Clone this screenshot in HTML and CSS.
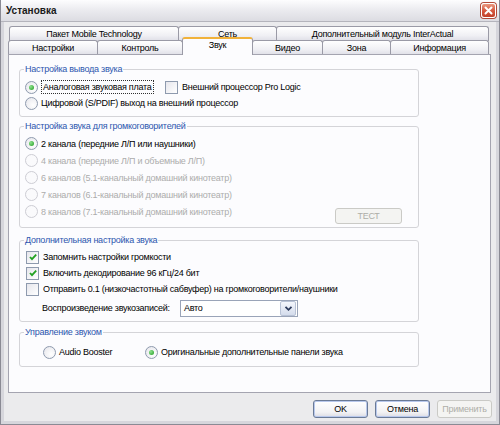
FILE: index.html
```html
<!DOCTYPE html>
<html>
<head>
<meta charset="UTF-8">
<title>Установка</title>
<link rel="stylesheet" href="styles.css">
</head>
<body>
<div class="window">
  <div class="titlebar">
    <span class="title">Установка</span>
    <span class="close-btn">
      <svg width="13" height="13" viewBox="0 0 13 13"><path d="M3.5 3.5 L9.5 9.5 M9.5 3.5 L3.5 9.5" stroke="#ffffff" stroke-width="2" stroke-linecap="round"/></svg>
    </span>
  </div>
  <div class="frame">
    <div class="client">
      <div class="tab-row back">
        <div class="tab w169">Пакет Mobile Technology</div>
        <div class="tab w99">Сеть</div>
        <div class="tab grow">Дополнительный модуль InterActual</div>
      </div>
      <div class="tab-row front">
        <div class="tab w89">Настройки</div>
        <div class="tab w86">Контроль</div>
        <div class="tab w71 selected">Звук</div>
        <div class="tab w71">Видео</div>
        <div class="tab w68">Зона</div>
        <div class="tab grow">Информация</div>
      </div>

      <div class="page">
        <fieldset class="group g-output">
          <legend>Настройка вывода звука</legend>
          <div class="row">
            <label class="opt first-opt"><span class="radio on"></span><span class="focus">Аналоговая звуковая плата</span></label>
            <label class="opt"><span class="check"></span>Внешний процессор Pro Logic</label>
          </div>
          <div class="row">
            <label class="opt"><span class="radio"></span>Цифровой (S/PDIF) выход на внешний процессор</label>
          </div>
        </fieldset>

        <fieldset class="group g-speakers">
          <legend>Настройка звука для громкоговорителей</legend>
          <div class="row tall">
            <label class="opt"><span class="radio on"></span>2 канала (передние Л/П или наушники)</label>
          </div>
          <div class="row tall">
            <label class="opt disabled"><span class="radio"></span>4 канала (передние Л/П и объемные Л/П)</label>
          </div>
          <div class="row tall">
            <label class="opt disabled"><span class="radio"></span>6 каналов (5.1-канальный домашний кинотеатр)</label>
          </div>
          <div class="row tall">
            <label class="opt disabled"><span class="radio"></span>7 каналов (6.1-канальный домашний кинотеатр)</label>
          </div>
          <div class="row tall last">
            <label class="opt disabled"><span class="radio"></span>8 каналов (7.1-канальный домашний кинотеатр)</label>
            <span class="button test disabled">ТЕСТ</span>
          </div>
        </fieldset>

        <fieldset class="group g-extra">
          <legend>Дополнительная настройка звука</legend>
          <div class="row">
            <label class="opt"><span class="check on"><svg width="10" height="10" viewBox="0 0 10 10"><path d="M2 5 L4 7.2 L8.2 2.6" fill="none" stroke="#21a121" stroke-width="1.8"/></svg></span>Запомнить настройки громкости</label>
          </div>
          <div class="row">
            <label class="opt"><span class="check on"><svg width="10" height="10" viewBox="0 0 10 10"><path d="M2 5 L4 7.2 L8.2 2.6" fill="none" stroke="#21a121" stroke-width="1.8"/></svg></span>Включить декодирование 96 кГц/24 бит</label>
          </div>
          <div class="row">
            <label class="opt"><span class="check"></span>Отправить 0.1 (низкочастотный сабвуфер) на громкоговорители/наушники</label>
          </div>
          <div class="row select-row">
            <span class="select-label">Воспроизведение звукозаписей:</span>
            <span class="select">
              <span class="select-value">Авто</span>
              <span class="select-arrow">
                <svg width="9" height="7" viewBox="0 0 9 7"><path d="M1.5 1.8 L4.5 4.8 L7.5 1.8" fill="none" stroke="#2c3a5c" stroke-width="1.8"/></svg>
              </span>
            </span>
          </div>
        </fieldset>

        <fieldset class="group g-control">
          <legend>Управление звуком</legend>
          <div class="row">
            <label class="opt booster"><span class="radio"></span>Audio Booster</label>
            <label class="opt"><span class="radio on"></span>Оригинальные дополнительные панели звука</label>
          </div>
        </fieldset>
      </div>

      <div class="buttons">
        <span class="button default">OK</span>
        <span class="button default">Отмена</span>
        <span class="button disabled">Применить</span>
      </div>
    </div>
  </div>
</div>
</body>
</html>
```

FILE: styles.css
```css
body {
 margin: 0;
 font-family: "Liberation Sans", Arial, sans-serif;
 font-size: 9px;
 letter-spacing: -0.25px;
 color: #000000;
 background: #ffffff;
}
.window {
 width: 500px;
 height: 425px;
 box-sizing: border-box;
 border: 1px solid #8a8a94;
 border-top: none;
 display: flex;
 flex-direction: column;
 background: #d6d6dc;
}
.titlebar {
 height: 22px;
 box-sizing: border-box;
 border-bottom: 1px solid #b4b4bc;
 background: linear-gradient(#fdfdfe, #ececf0 45%, #dcdce2);
 display: flex;
 align-items: center;
 padding: 0 3px 0 5px;
}
.title {
 font-weight: bold;
 font-size: 10px;
 letter-spacing: 0;
 color: #1a1a1a;
 flex: 1;
}
.close-btn {
 width: 13px;
 height: 13px;
 border: 1px solid #ffffff;
 border-radius: 3px;
 background: linear-gradient(#e99880, #d5553c 55%, #c2402a);
 box-shadow: 0 0 0 1px #b24a3a;
 display: flex;
}
.frame {
 flex: 1;
 padding: 0 3px 3px 3px;
 display: flex;
}
.client {
 flex: 1;
 background: #ebebed;
 padding: 4px 5px 0 4px;
 display: flex;
 flex-direction: column;
}
.tab-row {
 display: flex;
 height: 15px;
}
.tab-row.front {
 margin-top: -1px;
}
.tab {
 box-sizing: border-box;
 height: 15px;
 border: 1px solid #9a9aa6;
 border-bottom: none;
 border-radius: 3px 3px 0 0;
 background: linear-gradient(#ffffff, #f0f0f4 60%, #dedee6);
 text-align: center;
 line-height: 14px;
 margin-right: -1px;
 white-space: nowrap;
}
.tab-row.back .tab:first-child {
 margin-left: 1px;
}
.w169 { width: 170px; }
.w99 { width: 99px; }
.w89 { width: 90px; }
.w86 { width: 86px; }
.w71 { width: 71px; }
.w68 { width: 69px; }
.grow { flex: 1; margin-right: 2px; }
.tab.selected {
 position: relative;
 z-index: 1;
 height: 18px;
 margin-top: -3px;
 background: #fcfcfe;
 border-top: 2px solid #f1b23a;
 line-height: 13px;
}
.page {
 height: 339px;
 box-sizing: border-box;
 margin-top: -1px;
 border: 1px solid #a4a4b0;
 background: #fcfcfe;
 padding: 0 0 0 10px;
}
.group {
 width: 400px;
 box-sizing: border-box;
 margin: 0;
 border: 1px solid #d4d4d8;
 border-radius: 3px;
 padding: 3px 5px 4px 5px;
}
.group legend {
 color: #2c56ae;
 padding: 0 1px;
 margin-left: -1px;
 line-height: 12px;
 height: 12px;
}
.g-output { margin-top: 8px; padding-top: 4px; padding-bottom: 5px; }
.g-speakers { margin-top: 3px; padding-bottom: 4px; }
.g-extra { margin-top: 6px; }
.g-control { margin-top: 4px; padding-top: 6px; padding-bottom: 6px; }
.row {
 display: flex;
 align-items: center;
 height: 16px;
 white-space: nowrap;
}
.row.tall { height: 17px; }
.row.last {
 height: 20px;
 align-items: flex-start;
}
.row.last .opt { height: 17px; }
.opt {
 display: flex;
 align-items: center;
}
.first-opt { width: 139px; }
.booster { margin-left: 18px; width: 102px; }
.opt.disabled { color: #acacac; }
.radio {
 width: 11px;
 height: 11px;
 border: 1px solid #8e9aae;
 border-radius: 50%;
 background: radial-gradient(circle at 65% 65%, #ffffff, #e4e4ea);
 margin-right: 3px;
 display: flex;
 align-items: center;
 justify-content: center;
}
.radio.on::after {
 content: "";
 width: 5px;
 height: 5px;
 border-radius: 50%;
 background: radial-gradient(circle at 35% 35%, #8ee28e, #1e9a1e);
}
.disabled .radio {
 border-color: #cdcdd4;
 background: #fafafc;
}
.check {
 width: 11px;
 height: 11px;
 border: 1px solid #8e9aae;
 background: linear-gradient(135deg, #e6e6ec, #ffffff);
 margin: 0 4px 0 1px;
 display: flex;
 align-items: center;
 justify-content: center;
}
.focus {
 border: 1px dotted #303030;
 padding: 0 1px;
 line-height: 12px;
}
.select-row {
 height: 18px;
 margin-top: 2px;
}
.select-label {
 margin-left: 17px;
 width: 138px;
}
.select {
 width: 118px;
 height: 17px;
 box-sizing: border-box;
 border: 1px solid #9aa4b8;
 background: #ffffff;
 display: flex;
 align-items: center;
}
.select-value {
 flex: 1;
 padding-left: 3px;
}
.select-arrow {
 width: 14px;
 height: 13px;
 margin-right: 1px;
 border: 1px solid #b8c2d6;
 border-radius: 2px;
 background: linear-gradient(#f4f6fc, #d4dcec);
 display: flex;
 align-items: center;
 justify-content: center;
}
.button {
 box-sizing: border-box;
 width: 55px;
 height: 18px;
 border: 1px solid #6a7a96;
 border-radius: 3px;
 background: linear-gradient(#ffffff, #f2f2f4 70%, #dcdce4);
 display: flex;
 align-items: center;
 justify-content: center;
}
.button.default {
 box-shadow: inset 0 0 0 1px #b8c8ec;
}
.button.disabled {
 border-color: #cacac6;
 background: #f4f4f2;
 color: #aeaea8;
}
.button.test {
 width: 67px;
 height: 16px;
 margin: 5px 11px 0 auto;
}
.buttons {
 display: flex;
 justify-content: flex-end;
 gap: 7px;
 margin-top: 7px;
 margin-right: -1px;
}
```
